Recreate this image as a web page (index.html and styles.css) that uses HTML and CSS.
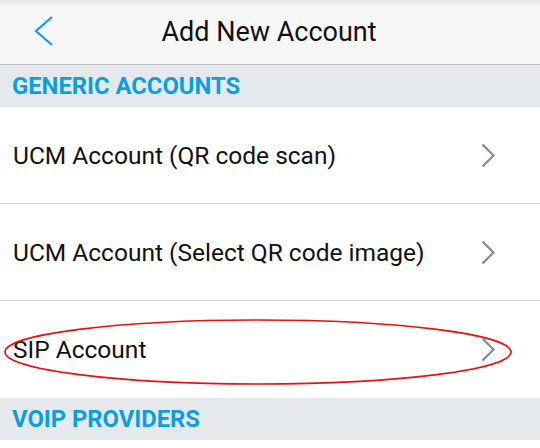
FILE: index.html
```html
<!DOCTYPE html>
<html lang="en">
<head>
    <meta charset="UTF-8">
    <meta name="viewport" content="width=device-width, initial-scale=1.0">
    <title>Add New Account</title>
    <link rel="stylesheet" href="styles.css">
</head>
<body>
    <div class="header">
        <svg class="back" width="22" height="32" viewBox="0 0 22 32">
            <polyline points="19,2 3,16 19,30" fill="none" stroke="#1a9be0" stroke-width="2.2"/>
        </svg>
        <h1>Add New Account</h1>
    </div>

    <div class="section">GENERIC ACCOUNTS</div>
    <div class="row">
        <span>UCM Account (QR code scan)</span>
        <svg class="chev" width="15" height="25" viewBox="0 0 15 25">
            <polyline points="1.5,1.5 12.5,12.5 1.5,23.5" fill="none" stroke="#8a8a8a" stroke-width="2.2"/>
        </svg>
    </div>
    <div class="row">
        <span>UCM Account (Select QR code image)</span>
        <svg class="chev" width="15" height="25" viewBox="0 0 15 25">
            <polyline points="1.5,1.5 12.5,12.5 1.5,23.5" fill="none" stroke="#8a8a8a" stroke-width="2.2"/>
        </svg>
    </div>
    <div class="row last">
        <span>SIP Account</span>
        <svg class="chev" width="15" height="25" viewBox="0 0 15 25">
            <polyline points="1.5,1.5 12.5,12.5 1.5,23.5" fill="none" stroke="#8a8a8a" stroke-width="2.2"/>
        </svg>
        <!-- marca roja alrededor de la fila -->
        <svg class="mark" width="512" height="68" viewBox="0 0 512 68">
            <ellipse cx="255" cy="34" rx="253" ry="32" fill="none" stroke="#e81010" stroke-width="1.6"/>
        </svg>
    </div>
    <div class="section">VOIP PROVIDERS</div>
</body>
</html>
```
FILE: styles.css
```css
body {
    margin: 0;
    font-family: Roboto, "Noto Sans", sans-serif;
    background-color: #ffffff;
    width: 540px;
    height: 448px;
    overflow: hidden;
}
.header {
    height: 64px;
    background: linear-gradient(#e6e6e6 0px, #f5f5f5 5px, #f7f7f7 10px);
    border-bottom: 1px solid #b9b9b9;
    display: flex;
    align-items: center;
    justify-content: center;
    padding-right: 2px;
    position: relative;
}
.back {
    position: absolute;
    left: 33px;
    top: 15px;
}
h1 {
    margin: 0;
    font-size: 27px;
    font-weight: normal;
    color: #111111;
}
.section {
    height: 42px;
    background-color: #e6e9ec;
    color: #0a9fe3;
    font-weight: bold;
    font-size: 23.8px;
    display: flex;
    align-items: center;
    padding-left: 12px;
}
.row {
    height: 96px;
    border-bottom: 1px solid #d4d4d4;
    display: flex;
    align-items: center;
    justify-content: space-between;
    padding: 0 44px 0 13px;
    font-size: 24.5px;
    color: #111111;
    position: relative;
}
.row.last {
    border-bottom: none;
    height: 97px;
}
.mark {
    position: absolute;
    left: 3px;
    top: 17px;
}
```
